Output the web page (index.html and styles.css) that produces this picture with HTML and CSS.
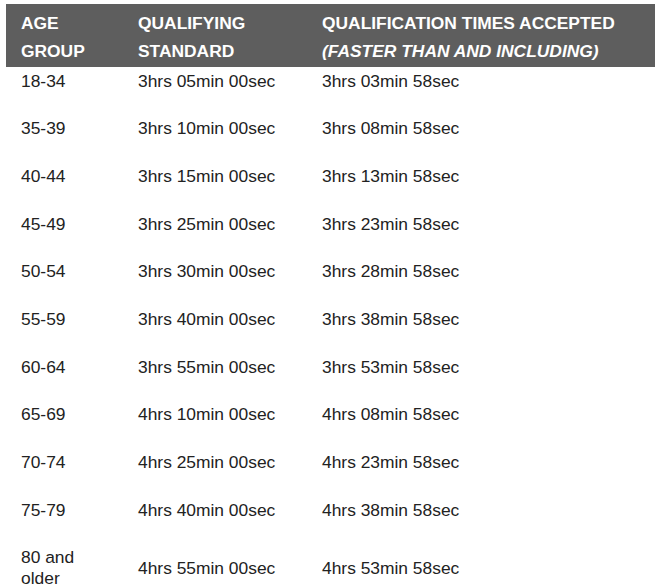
FILE: index.html
```html
<!DOCTYPE html>
<html>
<head>
<meta charset="utf-8">
<link rel="stylesheet" href="styles.css">
</head>
<body>
<table class="qt">
  <thead>
    <tr>
      <th class="c1">AGE<br>GROUP</th>
      <th class="c2">QUALIFYING<br>STANDARD</th>
      <th class="c3">QUALIFICATION TIMES ACCEPTED<br><em>(FASTER THAN AND INCLUDING)</em></th>
    </tr>
  </thead>
  <tbody>
    <tr><td>18-34</td><td>3hrs 05min 00sec</td><td>3hrs 03min 58sec</td></tr>
    <tr><td>35-39</td><td>3hrs 10min 00sec</td><td>3hrs 08min 58sec</td></tr>
    <tr><td>40-44</td><td>3hrs 15min 00sec</td><td>3hrs 13min 58sec</td></tr>
    <tr><td>45-49</td><td>3hrs 25min 00sec</td><td>3hrs 23min 58sec</td></tr>
    <tr><td>50-54</td><td>3hrs 30min 00sec</td><td>3hrs 28min 58sec</td></tr>
    <tr><td>55-59</td><td>3hrs 40min 00sec</td><td>3hrs 38min 58sec</td></tr>
    <tr><td>60-64</td><td>3hrs 55min 00sec</td><td>3hrs 53min 58sec</td></tr>
    <tr><td>65-69</td><td>4hrs 10min 00sec</td><td>4hrs 08min 58sec</td></tr>
    <tr><td>70-74</td><td>4hrs 25min 00sec</td><td>4hrs 23min 58sec</td></tr>
    <tr><td>75-79</td><td>4hrs 40min 00sec</td><td>4hrs 38min 58sec</td></tr>
    <tr><td>80 and<br>older</td><td>4hrs 55min 00sec</td><td>4hrs 53min 58sec</td></tr>
  </tbody>
</table>
</body>
</html>
```
FILE: styles.css
```css
html, body {
  margin: 0;
  padding: 0;
  background: #ffffff;
}
body {
  font-family: "Liberation Sans", Arial, sans-serif;
  font-size: 17.4px;
  color: #222222;
}
.qt {
  border-collapse: collapse;
  border-spacing: 0;
  margin: 4px 0 0 6px;
  width: 649px;
  table-layout: fixed;
}
.qt th {
  background: #5e5e5e;
  color: #ffffff;
  font-weight: bold;
  text-align: left;
  vertical-align: top;
  line-height: 28px;
  padding: 5px 0 2px 15px;
}
.qt th em {
  font-style: italic;
}
.qt .c1 { width: 102px; }
.qt .c2 { width: 169px; }
.qt .c3 { width: 333px; }
.qt td {
  text-align: left;
  vertical-align: middle;
  line-height: 20.5px;
  padding: 3.5px 0 23.7px 15px;
}
```
